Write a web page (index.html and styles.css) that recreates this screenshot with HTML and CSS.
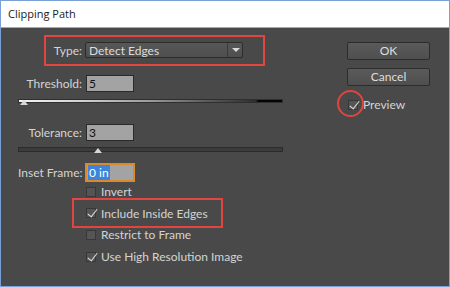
FILE: index.html
```html
<!DOCTYPE html>
<html lang="en">

<head>
    <meta charset="UTF-8">
    <title>Clipping Path</title>
    <link rel="stylesheet" href="styles.css">
</head>

<body>
    <div class="window">
        <div class="titlebar">Clipping Path</div>
        <div class="dialog">
            <div class="form">
                <div class="row type-row">
                    <label class="label">Type:</label>
                    <div class="select">
                        <span class="select-text">Detect Edges</span>
                        <span class="select-arrow"></span>
                    </div>
                </div>
                <div class="row threshold-row">
                    <label class="label">Threshold:</label>
                    <div class="field">5</div>
                </div>
                <div class="slider slider-gradient">
                    <span class="thumb thumb-start"></span>
                </div>
                <div class="row tolerance-row">
                    <label class="label">Tolerance:</label>
                    <div class="field">3</div>
                </div>
                <div class="slider slider-dark">
                    <span class="thumb thumb-mid"></span>
                </div>
                <div class="row inset-row">
                    <label class="label">Inset Frame:</label>
                    <div class="field field-focus"><span class="selected">0 in</span></div>
                </div>
                <div class="checks">
                    <div class="check"><span class="box"></span>Invert</div>
                    <div class="check"><span class="box checked"></span>Include Inside Edges</div>
                    <div class="check"><span class="box"></span>Restrict to Frame</div>
                    <div class="check"><span class="box checked"></span>Use High Resolution Image</div>
                </div>
            </div>
            <div class="side">
                <div class="button">OK</div>
                <div class="button">Cancel</div>
                <div class="check preview"><span class="box checked"></span>Preview</div>
            </div>
        </div>

        <!-- red annotations -->
        <div class="mark mark-type"></div>
        <div class="mark mark-inside"></div>
        <div class="mark mark-preview"></div>
    </div>
</body>

</html>
```

FILE: styles.css
```css
* {
    margin: 0;
    padding: 0;
    box-sizing: border-box;
}

body {
    width: 450px;
    height: 287px;
    font-family: Lato, "Open Sans", sans-serif;
    font-size: 12px;
    color: #d4d4d4;
    overflow: hidden;
}

.window {
    position: relative;
    width: 450px;
    height: 287px;
    border: 1px solid #7aa0d8;
    display: flex;
    flex-direction: column;
    background-color: #494949;
}

.titlebar {
    height: 27px;
    line-height: 25px;
    padding-left: 7px;
    background-color: #ffffff;
    border-bottom: 1px solid #a8a8a8;
    color: #1a1a1a;
    font-family: "Open Sans", sans-serif;
    font-size: 11px;
}

.dialog {
    flex: 1;
    display: flex;
    padding: 14px 0 0 17px;
}

.form {
    width: 265px;
    display: flex;
    flex-direction: column;
}

.row {
    display: flex;
    align-items: center;
    gap: 4px;
}

.label {
    width: 64px;
    text-align: right;
    white-space: nowrap;
}

.type-row {
    height: 16px;
}

.select {
    width: 158px;
    height: 16px;
    margin-left: -1px;
    display: flex;
    align-items: center;
    background: linear-gradient(#575757, #4e4e4e);
    border: 1px solid #2c2c2c;
    border-radius: 2px;
}

.select-text {
    flex: 1;
    padding-left: 3px;
    color: #dcdcdc;
}

.select-arrow {
    width: 15px;
    height: 14px;
    border-left: 1px solid #3a3a3a;
    position: relative;
}

.select-arrow::after {
    content: "";
    position: absolute;
    left: 4px;
    top: 5px;
    border-left: 4px solid transparent;
    border-right: 4px solid transparent;
    border-top: 4px solid #d8d8d8;
}

.threshold-row {
    margin-top: 17px;
}

.tolerance-row {
    margin-top: 21px;
}

.inset-row {
    margin-top: 11px;
}

.field {
    width: 48px;
    height: 17px;
    background-color: #a3a3a3;
    border: 1px solid #2a2a2a;
    color: #111111;
    padding-left: 2px;
    line-height: 15px;
    font-size: 12px;
}

.field-focus {
    height: 19px;
    width: 50px;
    margin-left: -1px;
    border: 2px solid #d98b2b;
    padding-left: 1px;
}

.selected {
    display: inline-block;
    background-color: #3b86dc;
    color: #ffffff;
    padding: 0 1px;
}

.slider {
    position: relative;
    width: 265px;
    border: 1px solid #2f2f2f;
}

.slider-gradient {
    margin-top: 7px;
    height: 4px;
    background: linear-gradient(to right, #f4f4f4 0%, #cfcfcf 25%, #9a9a9a 50%, #5a5a5a 72%, #2e2e2e 90%, #050505 91%, #050505 100%);
}

.slider-dark {
    margin-top: 6px;
    height: 5px;
    background-color: #3c3c3c;
    border-color: #2b2b2b;
}

.thumb {
    position: absolute;
    bottom: -3px;
    border-left: 4px solid transparent;
    border-right: 4px solid transparent;
    border-bottom: 5px solid #d6d6d6;
}

.thumb-start {
    left: 1px;
}

.thumb-mid {
    left: 75px;
    bottom: -2px;
}

.checks {
    margin-top: -1px;
    padding-left: 68px;
}

.check {
    height: 21.6px;
    display: flex;
    align-items: center;
    gap: 5px;
    white-space: nowrap;
}

.box {
    position: relative;
    width: 10px;
    height: 10px;
    background-color: #555555;
    border: 1px solid #383838;
}

.box.checked::after {
    content: "";
    position: absolute;
    left: 3px;
    top: -2px;
    width: 4px;
    height: 9px;
    border-right: 1.5px solid #dcdcdc;
    border-bottom: 1.5px solid #dcdcdc;
    transform: rotate(38deg);
}

.side {
    width: 83px;
    margin-left: 64px;
    display: flex;
    flex-direction: column;
}

.button {
    height: 18px;
    line-height: 16px;
    text-align: center;
    background: linear-gradient(#5a5a5a, #4f4f4f);
    border: 1px solid #2c2c2c;
    border-radius: 2px;
    color: #dedede;
}

.button + .button {
    margin-top: 8px;
}

.preview {
    margin-top: 8px;
    padding-left: 1px;
}

.mark {
    position: absolute;
    border: 2px solid #e2443f;
}

.mark-type {
    left: 43px;
    top: 34px;
    width: 221px;
    height: 31px;
}

.mark-inside {
    left: 71px;
    top: 197px;
    width: 151px;
    height: 30px;
}

.mark-preview {
    left: 336px;
    top: 89px;
    width: 27px;
    height: 27px;
    border-radius: 50%;
}
```
